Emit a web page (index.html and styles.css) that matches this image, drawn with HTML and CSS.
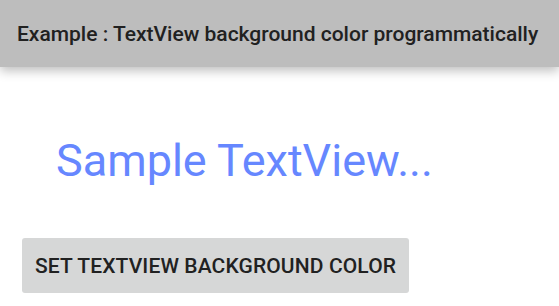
FILE: index.html
```html
<html>
  <head>
    <link rel="stylesheet" href="styles.css">
  </head>
  <body>
    <header class="toolbar">
      <h1 class="toolbar__title">Example : TextView background color programmatically</h1>
    </header>
    <main class="content">
      <p class="sample">Sample TextView...</p>
      <button class="btn">SET TEXTVIEW BACKGROUND COLOR</button>
    </main>
  </body>
</html>
```

FILE: styles.css
```css
* {
  padding: 0;
  margin: 0;
  box-sizing: border-box;
}

html {
  font-family: Roboto, "Liberation Sans", sans-serif;
  background: #fff;
}

.toolbar {
  height: 67px;
  background: #bdbdbd;
  display: flex;
  align-items: center;
  padding-left: 17px;
  box-shadow: 0 4px 10px rgba(0, 0, 0, 0.25);
}

.toolbar__title {
  font-size: 21px;
  font-weight: 500;
  color: #212121;
}

.content {
  display: flex;
  flex-direction: column;
  align-items: flex-start;
  padding: 0 22px;
}

.sample {
  margin-top: 68px;
  margin-left: 34px;
  font-size: 45px;
  color: #6687ff;
  line-height: 52px;
}

.btn {
  margin-top: 51px;
  height: 55px;
  padding: 0 13px;
  border: none;
  border-radius: 3px;
  background: #d6d7d7;
  font-family: Roboto, "Liberation Sans", sans-serif;
  font-size: 21px;
  font-weight: 500;
  letter-spacing: 0.12px;
  color: #212121;
}
```
